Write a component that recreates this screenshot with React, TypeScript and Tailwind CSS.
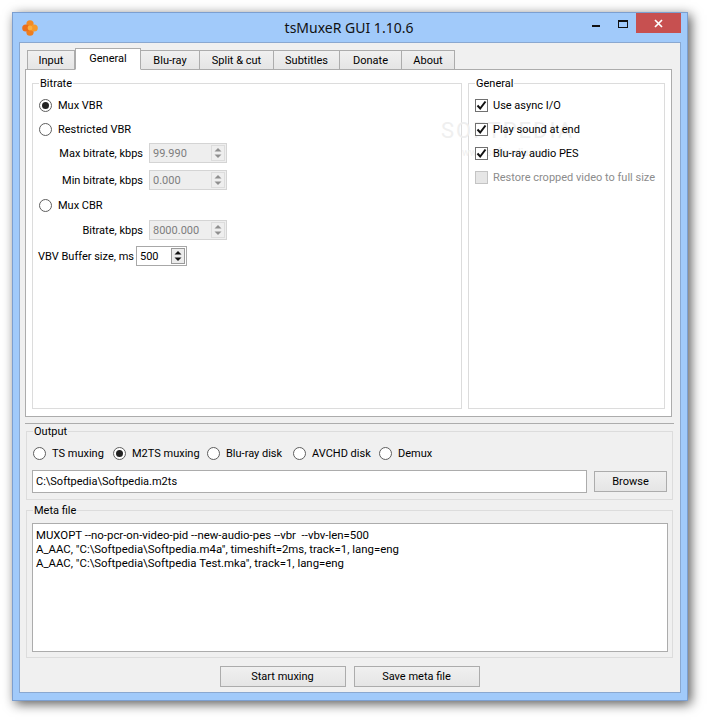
import React from 'react';

const tabs = [
  { name: 'Input', w: 'w-[48px]' },
  { name: 'General', w: 'w-[66px]', active: true },
  { name: 'Blu-ray', w: 'w-[60px]' },
  { name: 'Split & cut', w: 'w-[75px]' },
  { name: 'Subtitles', w: 'w-[67px]' },
  { name: 'Donate', w: 'w-[63px]' },
  { name: 'About', w: 'w-[54px]' },
];

const Radio: React.FC<{ checked?: boolean; label: string; className?: string }> = ({ checked, label, className }) => (
  <div className={`flex items-center gap-[6px] ${className ?? ''}`}>
    <span className="w-[13px] h-[13px] rounded-full border border-[#5e5e5e] bg-white flex items-center justify-center shrink-0">
      {checked && <span className="w-[7px] h-[7px] rounded-full bg-[#222222]" />}
    </span>
    <span>{label}</span>
  </div>
);

const Check: React.FC<{ checked?: boolean; disabled?: boolean; label: string }> = ({ checked, disabled, label }) => (
  <div className={`relative z-10 flex items-center gap-[5px] h-[24px] whitespace-nowrap ${disabled ? 'text-[#8c8c8c]' : ''}`}>
    <span className={`w-[13px] h-[13px] border flex items-center justify-center shrink-0 ${disabled ? 'border-[#c4c4c4] bg-[#e6e6e6]' : 'border-[#707070] bg-white'}`}>
      {checked && (
        <svg width="11" height="11" viewBox="0 0 11 11">
          <path d="M1.5 5.5 L4.2 8.5 L9.5 1.5" fill="none" stroke="#111111" strokeWidth="2" />
        </svg>
      )}
    </span>
    <span>{label}</span>
  </div>
);

const Spin: React.FC<{ value: string; disabled?: boolean; className?: string }> = ({ value, disabled, className }) => {
  const arrow = disabled ? '#8f8f8f' : '#111111';
  return (
    <div className={`h-[20px] border flex items-center ${disabled ? 'border-[#d4d4d4] bg-[#eeeeee] text-[#7d7d7d]' : 'border-[#a8a8a8] bg-white'} ${className ?? ''}`}>
      <span className="flex-1 pl-[3px]">{value}</span>
      <div className={`w-[14px] h-[16px] mr-[1px] border flex flex-col ${disabled ? 'border-[#dcdcdc] bg-[#eeeeee]' : 'border-[#9a9a9a] bg-[#ececec]'}`}>
        <svg className="flex-1" viewBox="0 0 12 7" width="12" height="7">
          <path d="M2.5 5.5 L9.5 5.5 L6 2 Z" fill={arrow} />
        </svg>
        <svg className="flex-1" viewBox="0 0 12 7" width="12" height="7">
          <path d="M2.5 1.5 L9.5 1.5 L6 5 Z" fill={arrow} />
        </svg>
      </div>
    </div>
  );
};

const SpinRow: React.FC<{ label: string; value: string; className?: string }> = ({ label, value, className }) => (
  <div className={`flex items-center h-[20px] ${className ?? ''}`}>
    <span className="w-[104px] text-right">{label}</span>
    <Spin value={value} disabled className="ml-[6px] w-[78px]" />
  </div>
);

const Button: React.FC<{ label: string; className?: string }> = ({ label, className }) => (
  <button className={`h-[21px] border border-[#acacac] bg-gradient-to-b from-[#f0f0f0] to-[#e5e5e5] text-center ${className ?? ''}`}>
    {label}
  </button>
);

export default function App() {
  return (
    <div className="w-[708px] h-[721px] bg-white pt-[12px] pl-[12px] text-[11px] leading-[15px] text-black font-['Roboto',sans-serif] overflow-hidden">
      <div className="w-[676px] h-[689px] bg-[#a1cafa] border border-[#7c9fd0] shadow-[3px_3px_11px_rgba(0,0,0,0.65)] flex flex-col">
        {/* Title bar */}
        <div className="h-[29px] relative flex items-center justify-center shrink-0">
          <svg className="absolute left-[9px] top-[7px]" width="16" height="16" viewBox="0 0 16 16">
            <circle cx="8" cy="3.8" r="3.6" fill="#f28a24" />
            <circle cx="8" cy="12.2" r="3.6" fill="#ef7d1c" />
            <circle cx="3.8" cy="8" r="3.6" fill="#ec6f1a" />
            <circle cx="12.2" cy="8" r="3.6" fill="#f59a2c" />
            <circle cx="8" cy="8" r="2.4" fill="#fbb040" />
          </svg>
          <span className="text-[14px] mr-[2px] -mt-[1px] text-[#111111] font-['Noto_Sans',sans-serif]">tsMuxeR GUI 1.10.6</span>
          <span className="absolute left-[579px] top-[12px] w-[8px] h-[2px] bg-[#111111]" />
          <span className="absolute left-[605px] top-[7px] w-[10px] h-[8px] border border-[#111111] border-t-2" />
          <div className="absolute right-[6px] top-0 w-[45px] h-[20px] bg-[#c75050] flex items-center justify-center">
            <svg width="9" height="9" viewBox="0 0 9 9">
              <path d="M1 1 L8 8 M8 1 L1 8" stroke="#ffffff" strokeWidth="1.7" />
            </svg>
          </div>
        </div>

        {/* Client area */}
        <div className="mx-[6px] mb-[7px] flex-1 bg-[#f0f0f0] border border-[#8aa8d0] flex flex-col">
          {/* Tabs */}
          <div className="flex items-end h-[27px] pl-[7px] -mb-px relative">
            {tabs.map((t) => (
              <div
                key={t.name}
                className={`${t.w} border border-[#acacac] text-center ${t.active ? 'h-[22px] bg-white border-b-white pt-[2px] relative z-10' : 'h-[20px] bg-gradient-to-b from-[#f0f0f0] to-[#e5e5e5] -ml-px first:ml-0 pt-[2px]'}`}
              >
                {t.name}
              </div>
            ))}
          </div>

          {/* Tab pane */}
          <div className="ml-[5px] mr-[8px] h-[348px] border border-[#acacac] bg-white flex gap-[6px] px-[6px] pb-[7px] pt-[6px]">
            <fieldset className="flex-1 min-w-0 border border-[#dcdcdc] pl-[6px]">
              <legend className="px-[1px]">Bitrate</legend>
              <Radio checked label="Mux VBR" className="h-[24px] mt-[2px]" />
              <Radio label="Restricted VBR" className="h-[24px]" />
              <SpinRow label="Max bitrate, kbps" value="99.990" className="mt-[2px]" />
              <SpinRow label="Min bitrate, kbps" value="0.000" className="mt-[7px]" />
              <Radio label="Mux CBR" className="h-[24px] mt-[3px]" />
              <SpinRow label="Bitrate, kbps" value="8000.000" className="mt-[3px]" />
              <div className="flex items-center h-[20px] mt-[6px] -ml-[1px]">
                <span className="w-[94px] whitespace-nowrap">VBV Buffer size, ms</span>
                <Spin value="500" className="ml-[4px] w-[51px]" />
              </div>
            </fieldset>
            <fieldset className="w-[197px] min-w-0 shrink-0 border border-[#dcdcdc] pl-[6px] relative">
              <legend className="px-[1px]">General</legend>
              <div className="mt-[2px]">
                <Check checked label="Use async I/O" />
                <Check checked label="Play sound at end" />
                <Check checked label="Blu-ray audio PES" />
                <Check disabled label="Restore cropped video to full size" />
              </div>
              <div className="absolute left-[-28px] top-[28px] text-[22px] leading-[24px] tracking-[2px] text-[#efefef] select-none">SOFTPEDIA</div>
              <div className="absolute left-[-7px] top-[54px] text-[10px] text-[#efefef] select-none">www.softpedia.com</div>
            </fieldset>
          </div>

          {/* Output */}
          <div className="ml-[5px] mr-[6px] mt-[6px] border-t border-[#acacac]">
            <fieldset className="mx-[1px] border border-[#dcdcdc] h-[76px] px-[5px]">
              <legend className="ml-[1px] px-[1px]">Output</legend>
              <div className="flex items-center h-[24px] mt-[2px]">
                <Radio label="TS muxing" className="w-[80px] ml-[1px]" />
                <Radio checked label="M2TS muxing" className="w-[94px]" />
                <Radio label="Blu-ray disk" className="w-[86px]" />
                <Radio label="AVCHD disk" className="w-[86px]" />
                <Radio label="Demux" />
              </div>
              <div className="flex items-center gap-[7px] mt-[5px]">
                <div className="w-[555px] h-[23px] border border-[#acacac] bg-white pl-[3px] flex items-center">C:\Softpedia\Softpedia.m2ts</div>
                <Button label="Browse" className="w-[73px]" />
              </div>
            </fieldset>

            {/* Meta file */}
            <fieldset className="mx-[1px] mt-[3px] border border-[#dcdcdc] h-[155px] pl-[5px] pr-[4px]">
              <legend className="ml-[1px] px-[1px]">Meta file</legend>
              <div className="mt-[5px] h-[129px] border border-[#acacac] bg-white pl-[3px] pt-[4px] leading-[14px] text-[11.4px] whitespace-pre">
                <div>MUXOPT --no-pcr-on-video-pid --new-audio-pes --vbr  --vbv-len=500</div>
                <div>A_AAC, "C:\Softpedia\Softpedia.m4a", timeshift=2ms, track=1, lang=eng</div>
                <div>A_AAC, "C:\Softpedia\Softpedia Test.mka", track=1, lang=eng</div>
              </div>
            </fieldset>
          </div>

          {/* Bottom buttons */}
          <div className="flex justify-center gap-[8px] mt-[8px] mr-[1px]">
            <Button label="Start muxing" className="w-[126px]" />
            <Button label="Save meta file" className="w-[126px]" />
          </div>
        </div>
      </div>
    </div>
  );
}
